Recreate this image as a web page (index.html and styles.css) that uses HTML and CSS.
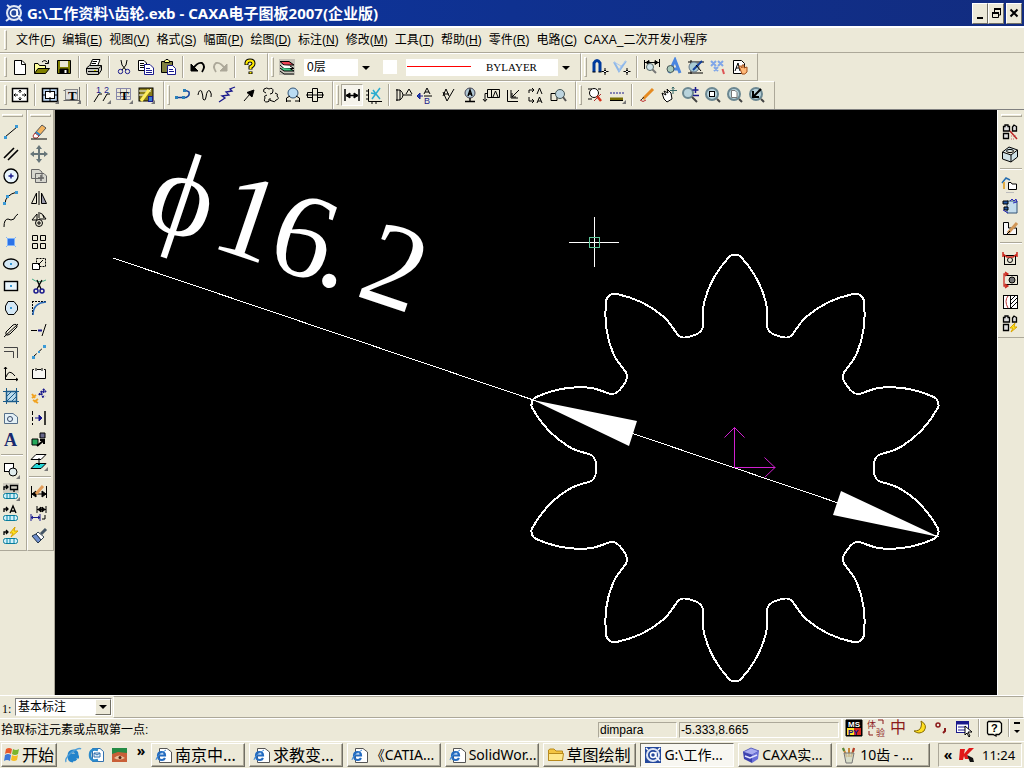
FILE: index.html
```html
<!DOCTYPE html>
<html lang="zh-CN">
<head>
<meta charset="utf-8">
<title>CAXA电子图板2007</title>
<link rel="stylesheet" href="styles.css">
</head>
<body>
<header class="titlebar">
  <svg class="ico" viewBox="0 0 20 20"><path d="M3 2L7 5M17 2L14 5M2 18L6 15M15 15L18 18" stroke="#dfe6f5" stroke-width="2"/><circle cx="10" cy="10" r="7" stroke="#dfe6f5" stroke-width="2" fill="#24489c"/><circle cx="10" cy="10" r="3.5" stroke="#fff" stroke-width="1.6"/><path d="M13 6V12L16 14" stroke="#fff" stroke-width="1.5"/></svg>
  <h1>G:\工作资料\齿轮.exb - CAXA电子图板2007(企业版)</h1>
  <div class="winbtns">
    <button aria-label="最小化"><svg viewBox="0 0 14 18"><path d="M4 14H10" stroke="#000" stroke-width="2"/></svg></button>
    <button aria-label="还原"><svg viewBox="0 0 14 18"><path d="M5.500 8V5H11.500V11H9" stroke="#000"/><path d="M5 5H12M3 9H10" stroke="#000" stroke-width="2"/><path d="M3.500 9V13.500H9.500V9" stroke="#000"/></svg></button>
    <button class="close" aria-label="关闭"><svg viewBox="0 0 14 18"><path d="M3.500 5.500L10.500 12.500M10.500 5.500L3.500 12.500" stroke="#000" stroke-width="2"/></svg></button>
  </div>
</header>

<nav class="menubar">
  <span class="grip"></span>
  <button>文件(<u>F</u>)</button><button>编辑(<u>E</u>)</button><button>视图(<u>V</u>)</button><button>格式(<u>S</u>)</button><button>幅面(<u>P</u>)</button><button>绘图(<u>D</u>)</button><button>标注(<u>N</u>)</button><button>修改(<u>M</u>)</button><button>工具(<u>T</u>)</button><button>帮助(<u>H</u>)</button><button>零件(<u>R</u>)</button><button>电路(<u>C</u>)</button><button>CAXA_二次开发小程序</button>
</nav>

<div class="toolrow">
  <div class="toolbar">
    <span class="grip"></span>
    <button class="tb" aria-label="新建"><svg viewBox="0 0 20 20"><path d="M4.500 3.500H12L15.500 7V17.500H4.500Z" fill="#fff"/><path d="M11.500 3.500V7.500H15.500"/></svg></button>
    <button class="tb" aria-label="打开"><svg viewBox="0 0 20 20"><path d="M2.500 16.500V6.500H6L7.500 8.500H13.500V11.500" fill="#ffff9c"/><path d="M2.500 16.500L6 11.500H17.500L13.500 16.500Z" fill="#808000"/><path d="M10 5Q13 2 15.500 5.500M16.500 3V6.500H13"/></svg></button>
    <button class="tb" aria-label="保存"><svg viewBox="0 0 20 20"><path d="M3.500 3.500H16.500V16.500H3.500Z" fill="#808000"/><path d="M6 4H14V10H6Z" fill="#e8e6d4" stroke="none"/><path d="M6 12H14V16H6Z" fill="#000"/><path d="M11.500 13V16" stroke="#fff" stroke-width="2"/></svg></button>
    <span class="sep"></span>
    <button class="tb" aria-label="打印"><svg viewBox="0 0 20 20"><path d="M6 8L8.500 2.500H16L14 8" fill="#fff"/><path d="M8.500 4.500H13M7.500 6.500H12"/><path d="M2.500 11L5.500 8.500H17.500V13L14.500 17.500H3.500L2.500 15.500Z" fill="#c8c8c0"/><path d="M2.500 11.500H14.500L17.500 9M14.500 12V17M4 14.500H14"/><path d="M10 13.500H12" stroke="#cc0"/></svg></button>
    <span class="sep"></span>
    <button class="tb" aria-label="剪切"><svg viewBox="0 0 20 20"><path d="M7 3L8 8L12 13M13 3L12 8L8 13" /><circle cx="6.500" cy="14.500" r="2.200" class="nb"/><circle cx="13.500" cy="14.500" r="2.200" class="nb"/></svg></button>
    <button class="tb" aria-label="复制"><svg viewBox="0 0 20 20"><path d="M2.500 3.500H8L10.500 6V13.500H2.500Z" fill="#fff"/><path d="M4 6.500H8M4 8.500H9M4 10.500H9"/><path d="M8.500 7.500H14L17.500 11V17.500H8.500Z" fill="#fff" class="nb"/><path d="M10 11.500H14M10 13.500H16M10 15.500H16" class="nb"/></svg></button>
    <button class="tb" aria-label="粘贴"><svg viewBox="0 0 20 20"><path d="M3.500 4.500H14.500V15.500H3.500Z" fill="#808040"/><path d="M6.500 5.500V4L8 2.500H10L11.500 4V5.500Z" fill="#ffff80"/><path d="M9.500 8.500H14.500L17.500 11.500V17.500H9.500Z" fill="#fff" class="nb"/><path d="M11 12.500H15M11 14.500H16" class="nb"/></svg></button>
    <span class="sep"></span>
    <button class="tb" aria-label="撤销"><svg viewBox="0 0 20 20"><path d="M3 7V14H10Z" fill="#000"/><path d="M5 12Q9 5 14 6Q18 9 14 15" stroke-width="1.800"/></svg></button>
    <button class="tb" aria-label="重做"><svg viewBox="0 0 20 20"><path d="M17 7V14H10Z" fill="#aca899" stroke="#aca899"/><path d="M15 12Q11 5 6 6Q2 9 6 15" stroke="#aca899" stroke-width="1.800"/></svg></button>
    <span class="sep"></span>
    <button class="tb" aria-label="帮助"><svg viewBox="0 0 20 20"><path d="M6.500 8V6Q7 3.500 10 3.500Q13.500 3.500 13.500 6.500Q13.500 8.500 10.500 10V12.500M10.500 14.500V17" stroke-width="4"/><path d="M6.500 7.500V6Q7 3.500 10 3.500Q13.500 3.500 13.500 6.500Q13.500 8.500 10.500 10V12M10.500 15V16.500" stroke="#ffeb00" stroke-width="2"/></svg></button>
  </div>
  <div class="toolbar">
    <span class="grip"></span>
    <button class="tb" aria-label="图层"><svg viewBox="0 0 20 20"><rect x="2" y="2" width="16" height="16" fill="#c6c3b8" stroke="none"/><path d="M3 4.500H12L17 8H7Z" fill="#e45"/><path d="M3 8L7 11.500H17L13 9" fill="#fff"/><path d="M3 11L7 14H17L13 11.500" fill="#4c8"/><path d="M3 14L7 17H17"/></svg></button>
    <span class="combo layer"><select aria-label="当前层"><option>0层</option></select><i></i></span>
    <button class="swatch" aria-label="颜色"></button>
    <span class="combo ltype"><b></b><select aria-label="线型"><option>BYLAYER</option></select><i></i></span>
  </div>
  <div class="toolbar end">
    <span class="grip"></span>
    <button class="tb" aria-label="捕捉"><svg viewBox="0 0 20 20"><path d="M4 15V6Q7 1 10 6V15" stroke="#003a9c" stroke-width="3"/><path d="M2.500 15H5.500M8.500 15H11.500"/><path d="M15 11V18M11.500 14.500H18.500"/><path d="M15 13L16.500 14.500L15 16L13.500 14.500Z" fill="#fff"/></svg></button>
    <button class="tb" aria-label="捕捉点"><svg viewBox="0 0 20 20"><path d="M2 5L7 14L14 4" stroke="#8fb8e8" stroke-width="2"/><path d="M2 5L9 9L14 4M9 9L7 14" stroke="#aac8ee"/><path d="M15 11V18M11.500 14.500H18.500"/><path d="M15 13L16.500 14.500L15 16L13.500 14.500Z" fill="#fff"/></svg></button>
    <span class="sep"></span>
    <button class="tb" aria-label="查询"><svg viewBox="0 0 20 20"><path d="M2.500 3V12M17.500 2V10M3 5.500H17M4 5.500L7 3.500V7.500ZM16 5.500L13 3.500V7.500Z" fill="#000"/><circle cx="8" cy="10" r="3.500" fill="#cfe3ea" stroke="#566"/><path d="M10.500 12.500L14 16" stroke="#777" stroke-width="2"/></svg></button>
    <button class="tb" aria-label="文字查询"><svg viewBox="0 0 20 20"><path d="M5 16L11 3L16 16M7 12H14" stroke="#4a86e0" stroke-width="3"/><circle cx="6.500" cy="12" r="3.500" fill="#a9cabb" stroke="#455"/></svg></button>
    <button class="tb" aria-label="面积查询"><svg viewBox="0 0 20 20"><path d="M2 5H18M2 16H17M5 3V17"/><circle cx="8" cy="10" r="5" fill="#a9ccd5" stroke="#678"/><path d="M7 13L16 4" stroke="#123f9c" stroke-width="2"/><path d="M10 8L15 14"/></svg></button>
    <button class="tb" aria-label="格式刷"><svg viewBox="0 0 20 20"><path d="M3 4L8 9M8 4L3 9M10 4L15 9M15 4L10 9M6 10L10 14M10 10L6 14" stroke="#7fa6e8" stroke-width="2"/><path d="M14.500 12L16 17" stroke="#d55" stroke-width="2"/></svg></button>
    <button class="tb" aria-label="拖动"><svg viewBox="0 0 20 20"><path d="M3.500 3.500H11.500L14.500 6.500V16.500H3.500Z" fill="#fff"/><path d="M5 14L8 6L10 14M6 11H10"/><path d="M9 9Q11 8 12 11V8H14V11L17 10V15Q15 18 12 17Z" fill="#ffb978" stroke="#a0501e"/></svg></button>
  </div>
</div>

<div class="toolrow row2">
  <div class="toolbar">
    <span class="grip"></span>
    <button class="tb" aria-label="图幅"><svg viewBox="0 0 20 20"><rect x="2.500" y="3.500" width="15" height="13" fill="#fff" stroke-width="1.500"/><path d="M10 5V8M10 12V15M4 10H8M12 10H16M8.500 6.500L10 5L11.500 6.500M8.500 13.500L10 15L11.500 13.500M5.500 8.500L4 10L5.500 11.500M14.500 8.500L16 10L14.500 11.500"/></svg></button>
    <span class="sep"></span>
    <button class="tb" aria-label="图框"><svg viewBox="0 0 20 20"><rect x="2.500" y="3.500" width="15" height="13" fill="#bbd4f0" stroke-width="1.500"/><rect x="5.500" y="6.500" width="9" height="7" fill="#fff"/><path d="M10 3V8M10 12V17M2 10H6M14 10H18"/><path d="M19 15V19H15Z" fill="#777" stroke="none"/></svg></button>
    <button class="tb" aria-label="标题栏"><svg viewBox="0 0 20 20"><path d="M1.500 5.500H16M17.500 2V17M1.500 15.500H17" stroke="#666"/><rect x="3.500" y="4.500" width="12" height="10" fill="#ddd" stroke="#888"/><text x="6" y="15" class="st">T</text><path d="M19 15V19H15Z" fill="#777" stroke="none"/></svg></button>
    <span class="sep"></span>
    <button class="tb" aria-label="序号"><svg viewBox="0 0 20 20"><path d="M2 17L7 9H10M11 16L15 9H18"/><text x="4" y="8" class="sn">1</text><text x="12" y="8" class="sn">2</text><path d="M19 15V19H15Z" fill="#777" stroke="none"/></svg></button>
    <button class="tb" aria-label="明细表"><svg viewBox="0 0 20 20"><path d="M2.500 3.500H16.500V14.500H2.500ZM2.500 7.500H16.500M2.500 11.500H16.500M6.500 3.500V14.500M12.500 3.500V14.500" stroke="#88a"/><text x="6" y="15" class="st">T</text><path d="M19 15V19H15Z" fill="#777" stroke="none"/></svg></button>
    <button class="tb" aria-label="背景"><svg viewBox="0 0 20 20"><rect x="3" y="3" width="14" height="13" fill="#887b18"/><path d="M3 6H15M3 10H8M9 10L15 4" stroke="#fff"/><path d="M5 16L13 5" stroke="#ffed5c" stroke-width="3"/><rect x="12.500" y="11.500" width="4" height="5" fill="#3a7fd0" class="nb"/><path d="M19 15V19H15Z" fill="#777" stroke="none"/></svg></button>
  </div>
  <div class="toolbar">
    <span class="grip"></span>
    <button class="tb" aria-label="多段线"><svg viewBox="0 0 20 20"><path d="M2 12.500H13Q17 11 16 7Q14 5 11 6" stroke="#123f9c" stroke-width="1.500"/><path d="M2 11H5V14H2ZM9 11H12V14H9ZM10 4H13V7H10Z" fill="#2b80b8" stroke="none"/></svg></button>
    <button class="tb" aria-label="波浪线"><svg viewBox="0 0 20 20"><path d="M3 10Q4 4 6.500 6Q8 10 8 14Q10 17 11 12Q12 4 15 6Q17 9 16 12"/></svg></button>
    <button class="tb" aria-label="双折线"><svg viewBox="0 0 20 20"><path d="M2 17L8 13L5 11L12 10L9 7L15 6L13 4L18 2" class="nb" stroke-width="1.300"/></svg></button>
    <button class="tb" aria-label="箭头"><svg viewBox="0 0 20 20"><path d="M5 16L11 9"/><path d="M15 5L13 12L8 7.500Z" fill="#000"/></svg></button>
    <button class="tb" aria-label="齿轮"><svg viewBox="0 0 20 20"><path d="M5 8Q1 7 3 4Q6 2 8 4Q12 2 12 6Q12 9 9 9M14 8Q18 9 16 11Q19 14 15 15Q14 18 11 16Q8 16 9 13M6 10Q2 11 4 13Q2 17 6 17Q9 17 8 14"/></svg></button>
    <button class="tb" aria-label="圆弧拟合"><svg viewBox="0 0 20 20"><circle cx="10" cy="8" r="5" fill="#b9dbf3" stroke="#357"/><path d="M3.500 17V13L7 11M16.500 17V13L13 11M4 16H8M16 16H12"/></svg></button>
    <button class="tb" aria-label="孔轴"><svg viewBox="0 0 20 20"><path d="M2.500 7.500H7.500V3.500H12.500V7.500H17.500V12.500H12.500V16.500H7.500V12.500H2.500ZM1 10H19M7.500 7V13M12.500 7V13"/></svg></button>
  </div>
  <div class="toolbar">
    <span class="grip"></span>
    <button class="tb on" aria-label="基本标注"><svg viewBox="0 0 20 20"><path d="M3 4V16M17 4V16M4 10.500H16" stroke-width="1.500"/><path d="M4 10.500L8 8V13ZM16 10.500L12 8V13Z" fill="#000"/></svg></button>
    <button class="tb" aria-label="坐标标注"><svg viewBox="0 0 20 20"><path d="M4.500 4V16.500H18M2 14H5M2 10H5M2 6H5M8 17V19M12 17V19"/><path d="M8 14L16 3M9 5L12 9L16 14M7 8L12 9" stroke="#29acd0" stroke-width="1.500"/></svg></button>
    <span class="sep"></span>
    <button class="tb" aria-label="倒角标注"><svg viewBox="0 0 20 20"><path d="M3 4V16M2 5H6Q12 10 6 15H2M6 5V15M9 10H18M12 9L15 4L18 9"/></svg></button>
    <button class="tb" aria-label="引出说明"><svg viewBox="0 0 20 20"><path d="M1 11L4 8V14ZM3 11H7" class="nb" fill="#1755c0"/><path d="M8 9L11 3L14 9M9 7H13M8 11H16"/><text x="8" y="19" class="sn">B</text></svg></button>
    <button class="tb" aria-label="粗糙度"><svg viewBox="0 0 20 20"><path d="M5 7L9 16L16 4M5 11L8 4L11 11M5 9H11"/></svg></button>
    <button class="tb" aria-label="基准代号"><svg viewBox="0 0 20 20"><circle cx="10" cy="8" r="5" fill="#afc6d3" stroke="#445"/><path d="M8 11L10 5L12 11M8 9H12M10 13V16M5 16.500H15" stroke-width="1.400"/></svg></button>
    <button class="tb" aria-label="形位公差"><svg viewBox="0 0 20 20"><path d="M5.500 4.500H17.500V12.500H5.500ZM9.500 4.500V12.500M5.500 8.500H3V16M1 14L3 16.500L5 14M11 12L13.500 6L16 12"/></svg></button>
    <button class="tb" aria-label="焊接符号"><svg viewBox="0 0 20 20"><path d="M3.500 5V16.500H14M7 5V13H14M8 12L15 5M8 8V12H12"/></svg></button>
    <button class="tb" aria-label="剖切符号"><svg viewBox="0 0 20 20"><path d="M3 5H8M6 3L8 5L6 7M3 5V8M3 12V16H8M6 14L8 16L6 18M11 9L13.500 3L16 9M11 18L13.500 12L16 18M12 16H15"/></svg></button>
    <button class="tb" aria-label="局部放大"><svg viewBox="0 0 20 20"><path d="M3 15.500V8.500H8M3 15.500H9V12"/><circle cx="12" cy="9" r="4.500" fill="#bdd4df" stroke="#455"/><path d="M15 12L18 16" stroke-width="2" stroke="#555"/></svg></button>
  </div>
  <div class="toolbar end">
    <span class="grip"></span>
    <button class="tb" aria-label="重画"><svg viewBox="0 0 20 20"><path d="M3 4H7M13 4H16M3 14H7"/><circle cx="9" cy="8" r="4.500" fill="#fff"/><path d="M12 11L16 16" stroke="#d7301a" stroke-width="2.500"/><path d="M16 9L9 16" stroke="#a33"/></svg></button>
    <button class="tb" aria-label="线宽"><svg viewBox="0 0 20 20"><path d="M3 8H17" stroke-dasharray="2 1" class="nb"/><path d="M3 14H16" stroke="#756b00" stroke-width="3"/><path d="M3 15.500H16"/><path d="M19 15V19H15Z" fill="#777" stroke="none"/></svg></button>
    <span class="sep"></span>
    <button class="tb" aria-label="画笔"><svg viewBox="0 0 20 20"><path d="M3 15Q6 18 9 15" stroke="#b33"/><path d="M6 14L16 4" stroke="#e58a21" stroke-width="3"/><path d="M4 15L7 12" stroke="#333"/></svg></button>
    <button class="tb" aria-label="平移"><svg viewBox="0 0 20 20"><path d="M3 8L7 10L5 6L9 8L8 4L12 8L13 14L8 17L5 14Z" fill="#fff"/><path d="M14 2V9M11 5.500H18M13 3.500L14 2L15.500 3.500" stroke="#366"/></svg></button>
    <button class="tb" aria-label="缩放"><svg viewBox="0 0 20 20"><circle cx="7" cy="8" r="5" class="lens"/><path d="M11 12L16 17" class="handle"/><path d="M14.500 2V8M11.500 5H17.500M12 10.500H18" class="nb" stroke-width="1.500"/></svg></button>
    <button class="tb" aria-label="窗口缩放"><svg viewBox="0 0 20 20"><circle cx="9" cy="9" r="6" class="lens"/><rect x="6.500" y="6.500" width="5" height="5" fill="#fff"/><path d="M14 14L17 17" class="handle"/></svg></button>
    <button class="tb" aria-label="全部显示"><svg viewBox="0 0 20 20"><circle cx="9" cy="9" r="6" class="lens"/><path d="M6.500 5.500H10L12 7.500V12.500H6.500Z" fill="#fff" stroke="#777"/><path d="M14 14L17 17" class="handle"/></svg></button>
    <button class="tb" aria-label="显示回溯"><svg viewBox="0 0 20 20"><circle cx="9" cy="9" r="6" class="lens"/><path d="M6 6V12H12M6 12L14 4" stroke-width="2"/><path d="M14 14L17 17" class="handle"/></svg></button>
  </div>
</div>

<main class="work">
  <aside class="dock left">
    <div class="vbar">
      <span class="vgrip"></span>
      <button class="tb" aria-label="直线"><svg viewBox="0 0 20 20"><path d="M4 15L16 5"/><path d="M3 14H6V17H3ZM14 3H17V6H14Z" class="pt"/></svg></button>
      <button class="tb" aria-label="平行线"><svg viewBox="0 0 20 20"><path d="M3 14L13 4M7 16L17 6" stroke-width="1.600"/></svg></button>
      <button class="tb" aria-label="圆"><svg viewBox="0 0 20 20"><circle cx="10" cy="10" r="7" fill="#e9f5fc" stroke-width="1.300"/><path d="M10 7.500V12.500M7.500 10H12.500" class="nb" stroke-width="1.400"/></svg></button>
      <button class="tb" aria-label="圆弧"><svg viewBox="0 0 20 20"><path d="M4 16Q4 7 16 4"/><path d="M2 14H5V17H2ZM5 7H8V10H5ZM14 3H17V6H14Z" class="pt"/></svg></button>
      <button class="tb" aria-label="样条"><svg viewBox="0 0 20 20"><path d="M3 17Q3 9 7 9Q10 11 13 9Q14 6 17 4"/></svg></button>
      <button class="tb" aria-label="点"><svg viewBox="0 0 20 20"><path d="M5 5L15 15M15 5L5 15" stroke="#7fb3f7"/><rect x="6.500" y="6.500" width="7" height="7" fill="#2c73e8" stroke="#7fb3f7"/></svg></button>
      <button class="tb" aria-label="椭圆"><svg viewBox="0 0 20 20"><ellipse cx="10" cy="10" rx="7.500" ry="5" fill="#d4e8f5" stroke-width="1.300"/><path d="M9 9H11V11H9Z" class="pt"/></svg></button>
      <button class="tb" aria-label="矩形"><svg viewBox="0 0 20 20"><rect x="3.500" y="5.500" width="13" height="9" fill="#e9f5fc" stroke-width="1.400"/><path d="M9 9H11V11H9Z" class="pt"/></svg></button>
      <button class="tb" aria-label="正多边形"><svg viewBox="0 0 20 20"><path d="M7 3.500H13L16.500 8V12L13 16.500H7L4.500 12V8Z" fill="#d4e8f5"/><path d="M9 9H11V11H9Z" class="pt"/></svg></button>
      <button class="tb" aria-label="中心线"><svg viewBox="0 0 20 20"><path d="M5 12L12 5Q16 3 16 7L9 14Q4 17 5 12ZM3 17L17 4"/></svg></button>
      <button class="tb" aria-label="等距线"><svg viewBox="0 0 20 20"><path d="M3 5.500H16.500V16M3 9.500H12.500V16" stroke="#444"/></svg></button>
      <button class="tb" aria-label="公式曲线"><svg viewBox="0 0 20 20"><path d="M4.500 3V15.500H17M3 5L4.500 3L6 5M15 14L17 15.500L15 17M5 13Q8 4 14 12"/></svg></button>
      <button class="tb" aria-label="剖面线"><svg viewBox="0 0 20 20"><path d="M5.500 5.500H15.500V15.500H5.500Z" fill="#bcdcec" stroke="#1b5b8a" stroke-width="1.500"/><path d="M5.500 2V18M15.500 2V18M2 5.500H18M2 15.500H18M6 10L10 6M6 15L15 6M11 15L15 11" stroke="#1b5b8a"/></svg></button>
      <button class="tb" aria-label="填充"><svg viewBox="0 0 20 20"><path d="M3.500 5.500H12L16.500 9V15.500H3.500Z" fill="#e3f0f5" stroke="#57708a"/><circle cx="9" cy="11" r="2.500" stroke="#346"/></svg></button>
      <button class="tb" aria-label="文字"><svg viewBox="0 0 20 20"><text x="3" y="16" class="big">A</text></svg></button>
      <span class="vsep"></span>
      <button class="tb" aria-label="块生成"><svg viewBox="0 0 20 20"><rect x="3.500" y="3.500" width="9" height="8" fill="#fff"/><circle cx="12" cy="12" r="4" fill="#e1ecec"/><path d="M19 15V19H15Z" fill="#777" stroke="none"/></svg></button>
      <button class="tb" aria-label="提取图符"><svg viewBox="0 0 20 20"><rect x="2" y="1" width="16" height="10" fill="#cfccc0" stroke="none"/><path d="M3 8V5H7M5 3L7 5L5 7M9.500 3.500H16.500V7.500H9.500ZM13 7.500V10" stroke-width="1.300"/><rect x="2.500" y="11.500" width="14" height="5" rx="2" class="tag"/><path d="M6 12V16M9 12V16M13 12V16" stroke="#08a"/><path d="M19 15V19H15Z" fill="#777" stroke="none"/></svg></button>
      <button class="tb" aria-label="技术要求"><svg viewBox="0 0 20 20"><path d="M3 8V5H7M5 3L7 5L5 7M9 9L12 2L15 9M10 7H14" stroke-width="1.300"/><rect x="2.500" y="11.500" width="14" height="5" rx="2" class="tag"/><path d="M6 12V16M9 12V16M13 12V16" stroke="#08a"/></svg></button>
      <button class="tb" aria-label="构件库"><svg viewBox="0 0 20 20"><path d="M3 9V6H7M5 4L7 6L5 8" stroke-width="1.300"/><path d="M14 1L9 7H12L10 11L17 5H13Z" fill="#ffe521" stroke="#d9a400"/><rect x="2.500" y="12.500" width="14" height="5" rx="2" class="tag"/><path d="M6 13V17M9 13V17M13 13V17" stroke="#08a"/></svg></button>
    </div>
    <div class="vbar">
      <span class="vgrip"></span>
      <button class="tb" aria-label="删除"><svg viewBox="0 0 20 20"><path d="M6 11L13 3L17 6L10 14Z" fill="#f4b45e" stroke="#555"/><path d="M6 11L10 14L8 16H5L4 14Z" fill="#fff" stroke="#a33"/><path d="M7 10L11 13" stroke="#38c" stroke-width="2"/><path d="M2 17H18"/></svg></button>
      <button class="tb" aria-label="移动"><svg viewBox="0 0 20 20"><path d="M10 3V17M3 10H17" stroke="#667579" stroke-width="2"/><path d="M10 1L13 5H7ZM10 19L7 15H13ZM1 10L5 7V13ZM19 10L15 7V13Z" fill="#667579" stroke="none"/></svg></button>
      <button class="tb" aria-label="复制对象"><svg viewBox="0 0 20 20"><path d="M2.500 3.500H10L13 6V12.500H2.500ZM6.500 7.500H15L17.500 10V16.500H6.500Z" fill="#d6d6ce" stroke="#666"/><path d="M12 9V15M9 12H15" stroke="#666" stroke-width="1.500"/></svg></button>
      <button class="tb" aria-label="镜像"><svg viewBox="0 0 20 20"><path d="M10 3V17"/><path d="M7.500 5V15.500H2.500Z"/><path d="M12.500 5V15.500H17.500Z" fill="#99a"/></svg></button>
      <button class="tb" aria-label="旋转"><svg viewBox="0 0 20 20"><path d="M3 10L8 4V10ZM10 2V8M11 3Q14 3 15 8M10 9H17L14 5"/><circle cx="10" cy="13" r="3.500"/><path d="M10 11V15M8 13H12"/></svg></button>
      <button class="tb" aria-label="阵列"><svg viewBox="0 0 20 20"><path d="M3.500 3.500H8.500V8.500H3.500ZM11.500 3.500H16.500V8.500H11.500ZM3.500 11.500H8.500V16.500H3.500ZM11.500 11.500H16.500V16.500H11.500Z"/></svg></button>
      <button class="tb" aria-label="比例缩放"><svg viewBox="0 0 20 20"><path d="M7.500 4.500H16.500V12.500H7.500Z" stroke-dasharray="2 1"/><path d="M3.500 9.500H10.500V15.500H3.500Z" fill="#fff"/><path d="M9 11L14 6"/></svg></button>
      <button class="tb" aria-label="裁剪"><svg viewBox="0 0 20 20"><path d="M3 3Q10 8 17 4" stroke="#4a8"/><path d="M8 4L12 13M13 4L8 13" stroke-width="1.300"/><circle cx="7" cy="15" r="2" class="nb" stroke-width="1.500"/><circle cx="13" cy="15" r="2" class="nb" stroke-width="1.500"/></svg></button>
      <button class="tb" aria-label="过渡"><svg viewBox="0 0 20 20"><path d="M3 3.500H18M3.500 3V18" stroke-dasharray="2 1"/><path d="M4 17Q4 5 17 4" stroke="#2768b8" stroke-width="1.500"/></svg></button>
      <button class="tb" aria-label="延伸"><svg viewBox="0 0 20 20"><path d="M2 10.500H8M13 16L17 4"/><path d="M9 10.500H13" class="nb" stroke-width="2"/></svg></button>
      <button class="tb" aria-label="打断"><svg viewBox="0 0 20 20"><path d="M4 15L16 4" stroke-dasharray="5 2"/><path d="M3 14H6V17H3ZM9 9H11V11H9ZM14 3H17V6H14Z" class="pt"/></svg></button>
      <button class="tb" aria-label="拉伸"><svg viewBox="0 0 20 20"><path d="M3.500 5.500H16.500V14.500H3.500Z" fill="#f6f6f2" stroke="none"/><path d="M5 5.500H3.500V14.500H16.500V5.500H15M8 5.500H12M7 4V7M13 4V7"/></svg></button>
      <button class="tb" aria-label="打散"><svg viewBox="0 0 20 20"><path d="M3 8L6 12M3 12L7 9M5 16L9 13M4 14L9 17" stroke="#f1a321" stroke-width="2"/><path d="M10 9L13 5M12 9L16 4M14 3L17 6M13 11L16 10" class="nb" stroke-dasharray="2 1" stroke-width="2"/></svg></button>
      <button class="tb" aria-label="属性移动"><svg viewBox="0 0 20 20"><path d="M3.500 3V17" stroke-dasharray="4 2"/><path d="M16 3V17" stroke-width="1.500"/><path d="M6 10H12M10 7L13 10L10 13Z" class="nb" fill="#009"/></svg></button>
      <button class="tb" aria-label="改变颜色"><svg viewBox="0 0 20 20"><path d="M11 3H16V8H11Z" fill="#668"/><path d="M3 9H9V15H3Z" fill="#24a75a"/><path d="M8 16L14 11M11 10H15V14" stroke-width="2"/></svg></button>
      <button class="tb" aria-label="改变层"><svg viewBox="0 0 20 20"><path d="M7 2.500H17L12 7.500H2Z" fill="#fff"/><path d="M7 11.500H17L12 16.500H2Z" fill="#23d7d7"/><path d="M10 6V13M8 11L10 13L12 11"/><path d="M19 15V19H15Z" fill="#777" stroke="none"/></svg></button>
      <span class="vsep"></span>
      <button class="tb" aria-label="标注编辑"><svg viewBox="0 0 20 20"><path d="M2.500 4V16M17.500 4V16M3 12H17M3 12L7 9V15ZM17 12L13 9V15Z" fill="#000"/><path d="M7 12L14 4" stroke="#e19b57" stroke-width="3"/></svg></button>
      <button class="tb" aria-label="尺寸驱动"><svg viewBox="0 0 20 20"><path d="M8 2V9M17 2V9M8 5.500H17M9 5.500L12 3V8ZM16 5.500L13 3V8Z" fill="#000"/><path d="M2 10V17M11 10V17M2 13.500H11M4 12L2 13.500L4 15M9 12L11 13.500L9 15" class="nb"/><path d="M16 11V15H13"/></svg></button>
      <button class="tb" aria-label="格式匹配"><svg viewBox="0 0 20 20"><path d="M17 3L12 8" stroke="#456" stroke-width="3"/><path d="M9 6L15 11L12 14L7 8Z" fill="#fff" stroke="#345"/><path d="M7 8L12 14L9 17L3 10Z" fill="#6f8fce" stroke="#234"/></svg></button>
    </div>
  </aside>

  <svg class="canvas" viewBox="55 110 942 585" role="img" aria-label="齿轮图">
    <defs><path id="tooth" d="M-43-132.200C-36-134-31-137-32-145C-32-151-33-157-31-165C-27-182-18-198-6-211Q-4-213.500 0-213.500Q4-213.500 6-211C18-198 27-182 31-165C33-157 32-151 32-145C31-137 36-134 43-132.200"/></defs>
    <g class="gear" transform="translate(735 468)">
      <use href="#tooth"/><use href="#tooth" transform="rotate(36)"/><use href="#tooth" transform="rotate(72)"/><use href="#tooth" transform="rotate(108)"/><use href="#tooth" transform="rotate(144)"/><use href="#tooth" transform="rotate(180)"/><use href="#tooth" transform="rotate(216)"/><use href="#tooth" transform="rotate(252)"/><use href="#tooth" transform="rotate(288)"/><use href="#tooth" transform="rotate(324)"/>
    </g>
    <path class="dim" d="M113 258L939 537"/>
    <path class="arrow" d="M533 400L637 421L629 446ZM939 537L841 491L833 515Z"/>
    <g transform="rotate(18.700)" class="dimtext"><text x="206" y="166">ϕ</text><text x="276 334 387 430" y="166">16.2</text></g>
    <path class="ucs" d="M734.500 467.500V427.500M724.500 437.500L734.500 427.500L744.500 437.500M734.500 467.500H775.500M764.500 457.500L775 467.500L764.500 477.500"/>
    <path class="cross" d="M594.500 217V267M569 242.500H619"/><rect class="pick" x="589.500" y="237.500" width="10" height="10"/>
  </svg>

  <aside class="dock right">
    <div class="vbar">
      <span class="vgrip"></span>
      <button class="tb" aria-label="零件拆分"><svg viewBox="0 0 20 20"><path d="M3.500 4.500H5V3H8V4.500H9.500V9H3.500ZM12.500 9V5L14 3L16.500 4.500V9ZM3.500 11.500H8.500V16.500H3.500Z" fill="#ddd" stroke-width="1.300"/><path d="M10 9L17 17" stroke="#b22" stroke-width="1.500"/><path d="M11 14H16M11 17H15" stroke="#c66" stroke-dasharray="1 1"/></svg></button>
      <button class="tb" aria-label="三维"><svg viewBox="0 0 20 20"><path d="M2.500 8L9 3L17.500 6V13L11 18L2.500 15ZM2.500 8L11 11L17.500 6M11 11V18" fill="#cfe0e4"/><ellipse cx="10" cy="7" rx="3.500" ry="1.600"/></svg></button>
      <span class="vsep"></span>
      <button class="tb" aria-label="部件插入"><svg viewBox="0 0 20 20"><path d="M2 9L6 4L10 6" stroke="#256eb0" stroke-width="1.500"/><path d="M4 8V15" stroke="#e0ab44" stroke-width="2"/><path d="M8.500 8.500H11L12 10H16.500V15.500H8.500Z" fill="#fff"/><path d="M6 18.500H14" stroke="#bbb"/></svg></button>
      <button class="tb" aria-label="部件编辑"><svg viewBox="0 0 20 20"><path d="M7 5H17V17H7Z" fill="#c3dcec" stroke="#357"/><path d="M3 5H8V8H3ZM4 11H8V14H4Z" fill="#235aa6"/><path d="M3 14L8 17M10 5L12 3L14 5L16 3L17 6L13 7" stroke="#2b2bb8"/></svg></button>
      <button class="tb" aria-label="部件修改"><svg viewBox="0 0 20 20"><path d="M3.500 4.500H8.500V10H16.500V16.500H3.500Z" fill="#f7f7f7"/><path d="M8 15L17 5" stroke="#d19758" stroke-width="3"/><path d="M7 16L10 13"/></svg></button>
      <span class="vsep"></span>
      <button class="tb" aria-label="配合"><svg viewBox="0 0 20 20"><rect x="4.500" y="7.500" width="11" height="9"/><circle cx="10" cy="12" r="2.500"/><path d="M3 4V9M17 4V9M3 6L7 9H13L17 6" stroke="#cc2a1f" stroke-width="1.500"/></svg></button>
      <button class="tb" aria-label="旋转配合"><svg viewBox="0 0 20 20"><path d="M5 5.500H17.500V14.500H5"/><circle cx="12" cy="10" r="3" fill="#777"/><path d="M7 4H4V16H7M5 2L8 4L5 6M5 14L8 16L5 18" stroke="#cc2a1f" stroke-width="1.300"/></svg></button>
      <button class="tb" aria-label="剖视"><svg viewBox="0 0 20 20"><rect x="3.500" y="3.500" width="14" height="13" fill="#fff"/><path d="M10.500 3V17M11 8L16 3M11 12L17 6M11 16L17 10"/><path d="M8 4Q4 9 8 16" stroke="#b33"/></svg></button>
      <button class="tb" aria-label="自动拆分"><svg viewBox="0 0 20 20"><path d="M3.500 3.500H5V2H8V3.500H9.500V8H3.500ZM12.500 8V4L14 2L16.500 3.500V8ZM3.500 10.500H8.500V16.500H3.500Z" fill="#ddd" stroke-width="1.300"/><path d="M15 9L10 14H13L11 18L17 13H14Z" fill="#ffe521" stroke="#d9a400"/></svg></button>
    </div>
  </aside>
</main>

<section class="params">
  <label for="dimtype">1:</label>
  <span class="combo raised"><select id="dimtype"><option>基本标注</option></select><i></i></span>
  <span class="filler"></span>
</section>

<section class="status">
  <p>拾取标注元素或点取第一点:</p>
  <span class="field f1">dimpara</span>
  <span class="field f2">-5.333,8.665</span>
  <div class="langbar">
    <button class="tb" aria-label="微软拼音"><svg viewBox="0 0 20 20"><path d="M2 2H18V18H2Z" fill="#000"/><path d="M3 10H10V17H3Z" fill="#ffe12b" stroke="none"/><path d="M10 10H17V17H10Z" fill="#d9261c" stroke="none"/><text x="4" y="9" class="ms">MS</text><text x="4" y="17" class="py">PY</text></svg></button>
    <button class="tb" aria-label="体验"><svg viewBox="0 0 20 20"><text x="1" y="10" class="red s">体</text><text x="10" y="18" class="red s">验</text><path d="M12 2H17V6M3 13V17H7" stroke="#8b1a1a"/></svg></button>
    <button class="tb red zh">中</button>
    <button class="tb" aria-label="半角"><svg viewBox="0 0 20 20"><path d="M11 3Q18 7 14 13Q9 17 4 13Q10 13 11 9Q12 6 11 3Z" fill="#ffdf20" stroke="#876b00"/></svg></button>
    <button class="tb" aria-label="中文标点"><svg viewBox="0 0 20 20"><circle cx="6" cy="7" r="2" stroke="#8b1a1a" stroke-width="1.500"/><path d="M13 10V13L11 15" stroke="#8b1a1a" stroke-width="2"/></svg></button>
    <button class="tb" aria-label="菜单"><svg viewBox="0 0 20 20"><rect x="2.500" y="3.500" width="12" height="11" fill="#fff" class="nb"/><path d="M3 5H14" class="nb" stroke-width="3"/><path d="M4 9H12M4 12H12" class="nb"/><path d="M11 8V17L13 15L15 19L16 18L14 14H18Z" fill="#fff"/></svg></button>
    <span class="sep"></span>
    <button class="tb" aria-label="输入法帮助"><svg viewBox="0 0 20 20"><path d="M4.500 3.500H15.500L17.500 5.500V14L15 16.500H12V18L9 16.500H4.500L3.500 15V4.500Z" fill="#fffff0" stroke-width="1.300"/><text x="7" y="14" class="q">?</text></svg></button>
    <span class="sep"></span>
    <button class="more" aria-label="选项"><svg viewBox="0 0 8 20"><path d="M1 5H7" stroke-width="2"/><path d="M1 12H7L4 15Z" fill="#000" stroke="none"/></svg></button>
  </div>
</section>

<footer class="taskbar">
  <button class="start"><svg class="ico" viewBox="0 0 20 20"><path d="M4 4Q7 2 10 4L9 9Q6 7 3 9Z" fill="#e9592b"/><path d="M11 4Q14 6 17 4L16 9Q13 11 10 9Z" fill="#7ab52e"/><path d="M3 10Q6 8 9 10L8 16Q5 14 2 16Z" fill="#3e78d8"/><path d="M10 10Q13 12 16 10L15 15Q12 17 9 15Z" fill="#f6bd24"/></svg>开始</button>
  <div class="quick">
    <a href="#ie" aria-label="Internet Explorer"><svg viewBox="0 0 20 20"><path d="M16 12H6.500Q7 15 10 15Q12 15 13 13.500M6 10H14Q14 6 10.500 6Q6 6 6 11Q6 16 10 16" stroke="#2383cb" stroke-width="3"/><path d="M3 17Q1 14 9 7Q16 2 18 4" stroke="#4f9ed8" stroke-width="1.500"/></svg></a>
    <a href="#outlook" aria-label="Outlook Express"><svg viewBox="0 0 20 20"><path d="M6.500 3.500H14L17.500 6.500V16.500H6.500Z" fill="#fff" stroke="#3170ae"/><path d="M12 5Q4 3 4 10Q4 17 12 15" stroke="#2b8bcc" stroke-width="2.500"/><path d="M8 8H14V12H8ZM8 8L11 10L14 8" fill="#e6f3fb" stroke="#3170ae"/></svg></a>
    <a href="#desk" aria-label="图片"><svg viewBox="0 0 20 20"><rect x="3" y="3" width="15" height="14" fill="#c95f38"/><path d="M3 3H18V8L9 7L3 9Z" fill="#258b45"/><path d="M5 13Q10 8 16 13Q10 16 5 13" fill="#ebc29d"/><circle cx="11" cy="12.500" r="1.500" fill="#521"/></svg></a>
  </div>
  <button class="chev">»</button>
  <div class="tasks">
    <button class="wide"><svg class="ico" viewBox="0 0 20 20"><path d="M5.500 3.500H13L17.500 7V17.500H5.500Z" fill="#fff" stroke="#555"/><path d="M4 10.500H11Q11 7 7.500 7Q4 7 4 11Q4 15 8 15Q10 15 11 13" stroke="#236bc0" stroke-width="2.200"/><path d="M2 15Q2 11 12 5" stroke="#4a90d8"/></svg>南京中...</button>
    <button class="wide"><svg class="ico" viewBox="0 0 20 20"><path d="M5.500 3.500H13L17.500 7V17.500H5.500Z" fill="#fff" stroke="#555"/><path d="M4 10.500H11Q11 7 7.500 7Q4 7 4 11Q4 15 8 15Q10 15 11 13" stroke="#236bc0" stroke-width="2.200"/><path d="M2 15Q2 11 12 5" stroke="#4a90d8"/></svg>求教变...</button>
    <button><svg class="ico" viewBox="0 0 20 20"><path d="M5.500 3.500H13L17.500 7V17.500H5.500Z" fill="#fff" stroke="#555"/><path d="M4 10.500H11Q11 7 7.500 7Q4 7 4 11Q4 15 8 15Q10 15 11 13" stroke="#236bc0" stroke-width="2.200"/><path d="M2 15Q2 11 12 5" stroke="#4a90d8"/></svg>《CATIA...</button>
    <button><svg class="ico" viewBox="0 0 20 20"><path d="M5.500 3.500H13L17.500 7V17.500H5.500Z" fill="#fff" stroke="#555"/><path d="M4 10.500H11Q11 7 7.500 7Q4 7 4 11Q4 15 8 15Q10 15 11 13" stroke="#236bc0" stroke-width="2.200"/><path d="M2 15Q2 11 12 5" stroke="#4a90d8"/></svg>SolidWor...</button>
    <button class="wide"><svg class="ico" viewBox="0 0 20 20"><path d="M2.500 15.500V5L4 4H8L10 6H16.500V15.500Z" fill="#f4c542" stroke="#b88a1c"/><path d="M2.500 15.500V8.500H17.500L16.500 15.500Z" fill="#ffe78a" stroke="#b88a1c"/></svg>草图绘制</button>
    <button class="active" aria-pressed="true"><svg class="ico" viewBox="0 0 20 20"><rect x="2" y="2" width="16" height="16" fill="#24489c"/><circle cx="10" cy="10" r="6" stroke="#dfe6f5" stroke-width="2"/><circle cx="10" cy="10" r="2.500" stroke="#fff" stroke-width="1.500"/><path d="M13 7V12L17 16M3 3L5 5M17 3L15 5" stroke="#fff" stroke-width="1.500"/></svg>G:\工作...</button>
    <button><svg class="ico" viewBox="0 0 20 20"><path d="M2 7L10 3L18 6L11 10Z" fill="#a9adf0" stroke="#5b60c0"/><path d="M2 7L11 10V18L3 14Z" fill="#3b41ae"/><path d="M11 10L18 6L17 14L11 18Z" fill="#6a70d8"/><path d="M4 11L9 13L16 10" stroke="#e4e6ff" stroke-width="1.600"/></svg>CAXA实...</button>
    <button><svg class="ico" viewBox="0 0 20 20"><path d="M8 12L4 3M10 12V3M12 12L15 3" stroke="#c98934" stroke-width="2"/><path d="M4 3L5 6" stroke="#4a8a3c" stroke-width="2"/><path d="M15 3L14 7" stroke="#b43b2c" stroke-width="2"/><path d="M5 8H15L13 18H7Z" fill="#cfd6c2" fill-opacity=".7" stroke="#777"/></svg>10齿 - ...</button>
  </div>
  <div class="tray">
    <button class="chev">«</button>
    <svg class="ico" viewBox="0 0 20 20"><path d="M4 4H9L8 9L13 3H18L11 10L13 14H9L8 11L7 15H3Z" fill="#e11919"/><path d="M11 10L17 13L18 17L14 17Z" fill="#111"/></svg>
    <time>11:24</time>
  </div>
</footer>
</body>
</html>
```
FILE: styles.css
```css
* { box-sizing: border-box; }
html, body { height: 100%; }
body {
  margin: 0;
  display: flex;
  flex-direction: column;
  min-height: 100vh;
  background: #ece9d8;
  color: #000;
  font: 12px/16px "Liberation Sans", "Noto Sans CJK SC", sans-serif;
  overflow: hidden;
}
button, select { font: inherit; color: inherit; margin: 0; padding: 0; border: 0; background: none; border-radius: 0; }
svg { fill: none; display: block; }
.ico { width: 20px; height: 20px; flex: none; }

.titlebar {
  display: flex;
  align-items: center;
  height: 26px;
  flex: none;
  padding: 0 2px 0 4px;
  gap: 3px;
  background: linear-gradient(90deg, #0c36a4, #0f3190 50%, #122c80);
  color: #fff;
}
.titlebar h1 { flex: 1; margin: 0; font: bold 15px/20px "Noto Sans", "Noto Sans CJK SC", sans-serif; white-space: nowrap; }
.winbtns { display: flex; }
.winbtns button {
  width: 16px;
  height: 21px;
  background: #ece9d8;
  border: 1px solid;
  border-color: #fff #716f64 #716f64 #fff;
}
.winbtns .close { margin-left: 2px; }
.winbtns svg { width: 14px; height: 18px; }

.menubar {
  display: flex;
  align-items: center;
  height: 27px;
  flex: none;
  padding-left: 4px;
  border-top: 2px solid #fff;
  border-bottom: 1px solid #aca899;
}
.menubar button { padding: 0 4px 0 3px; white-space: nowrap; }
.menubar .grip { margin-right: 6px; }
.grip {
  width: 3px;
  height: 20px;
  flex: none;
  border: 1px solid;
  border-color: #fff #aca899 #aca899 #fff;
}
.toolrow { display: flex; height: 28px; flex: none; }
.toolbar {
  display: flex;
  align-items: center;
  padding: 0 6px 0 4px;
  border-top: 1px solid #fff;
  border-right: 1px solid #aca899;
  border-bottom: 1px solid #aca899;
}
.toolbar + .toolbar { border-left: 1px solid #fff; padding-left: 2px; }
.toolbar .grip { margin-right: 2px; }
.tb { width: 22px; height: 22px; flex: none; display: flex; align-items: center; justify-content: center; }
.tb svg { width: 20px; height: 20px; flex: none; stroke: #000; }
.tb.on { border: 1px solid; border-color: #aca899 #fff #fff #aca899; background: #f6f4ec; }
.tb text { stroke: none; fill: #000; }
.sep { width: 2px; height: 22px; margin: 0 3px; flex: none; border-left: 1px solid #aca899; border-right: 1px solid #fff; }
.tb .nb { stroke: #1a1a8c; }
.tb .pt { fill: #3b9ad6; stroke: none; }
.tb .tag { fill: #d3f0fa; stroke: #087c9c; }
.tb .lens { fill: #b8d3dc; stroke: #6b8791; stroke-width: 2; }
.tb .handle { stroke: #444; stroke-width: 2; }
.tb .st { font: bold 13px "Liberation Serif", serif; }
.tb .sn { font: 9px "Liberation Sans", sans-serif; fill: #1a1a8c; }
.tb .big { font: bold 18px "Liberation Serif", serif; fill: #17296f; }
.tb .ms { font: bold 8px "Liberation Sans", sans-serif; fill: #fff; }
.tb .py { font: bold 8px "Liberation Sans", sans-serif; fill: #10108c; }
.tb .q { font: bold 11px "Liberation Sans", sans-serif; }

.combo { position: relative; display: flex; height: 17px; background: #fff; }
.combo select { width: 100%; height: 100%; appearance: none; outline: 0; }
.combo i {
  position: absolute;
  right: 0;
  top: 0;
  width: 16px;
  height: 100%;
  background: #ece9d8;
  pointer-events: none;
}
.combo i::after {
  content: "";
  position: absolute;
  left: 4px;
  top: 7px;
  border: 4px solid transparent;
  border-top-color: #000;
  border-bottom: 0;
}
.layer { width: 70px; margin-left: 6px; }
.layer select { padding-left: 3px; }
.swatch { width: 14px; height: 14px; background: #fff; margin: 0 9px; }
.ltype { width: 168px; }
.ltype select { padding-left: 80px; font: 11px "Liberation Serif", serif; }
.ltype b { position: absolute; z-index: 1; left: 1px; top: 7px; width: 64px; height: 1px; background: #f00; }

.row2 { height: 29px; border-bottom: 1px solid #808080; }
.row2 .toolbar { border-bottom: 0; padding-bottom: 1px; }

.work { display: flex; flex: 1; min-height: 0; background: #000; }
.dock { display: flex; background: #ece9d8; flex: none; align-items: flex-start; }
.vbar { display: flex; flex-direction: column; align-items: flex-start; padding-top: 4px; width: 27px; }
.left { border-right: 1px solid #aca899; }
.left .vbar { height: 441px; border-bottom: 1px solid #aca899; border-right: 1px solid #aca899; }
.left .vbar + .vbar { border-left: 1px solid #fff; }
.vgrip { width: 21px; height: 3px; flex: none; border: 1px solid; border-color: #fff #aca899 #aca899 #fff; margin: 0 0 4px 2px; }
.vsep { width: 22px; height: 2px; margin: 3px 0 3px 1px; flex: none; border-top: 1px solid #aca899; border-bottom: 1px solid #fff; }
.right { border-left: 1px solid #fff; }
.right .vbar { width: 26px; padding-left: 1px; padding-bottom: 2px; border-bottom: 1px solid #aca899; }

.canvas { flex: 1; min-width: 0; height: 100%; background: #000; }
.gear { stroke: #fff; stroke-width: 2; shape-rendering: crispEdges; }
.dim { stroke: #fff; shape-rendering: crispEdges; }
.arrow { fill: #fff; }
.dimtext { fill: #fff; font: 120px "Liberation Serif", serif; }
.ucs { stroke: #d020d0; }
.cross { stroke: #fff; }
.pick { stroke: #5fc79a; }

.params {
  display: flex;
  align-items: center;
  height: 23px;
  flex: none;
  padding-left: 2px;
  border-top: 1px solid #fff;
}
.params label { width: 13px; padding-top: 3px; font-family: "Liberation Serif", serif; }
.raised { width: 97px; height: 18px; border: 1px solid; border-color: #808080 #fff #fff #808080; }
.raised select { padding-left: 2px; }
.raised i { border: 1px solid; border-color: #fff #716f64 #716f64 #fff; }
.raised i::after { left: 3px; top: 5px; }
.filler { flex: 1; align-self: stretch; margin-left: 1px; border: 1px solid; border-color: #aca899 #fff #aca899 #fff; }

.status { display: flex; align-items: center; height: 23px; flex: none; border-top: 1px solid #fff; }
.status p { flex: 1; margin: 0; padding-left: 1px; white-space: nowrap; }
.field { height: 16px; line-height: 15px; border: 1px solid; border-color: #aca899 #fff #fff #aca899; margin-right: 2px; padding-left: 1px; }
.f1 { width: 79px; }
.f2 { width: 160px; }
.langbar { display: flex; align-items: center; align-self: stretch; width: 183px; padding-bottom: 4px; border-left: 2px solid #fff; }
.langbar .tb, .langbar .sep { height: 18px; }
.red { color: #8b1a1a; }
.tb .red { fill: #8b1a1a; }
.tb .s { font: 9px "Noto Sans CJK SC", sans-serif; }
.zh { font-size: 16px; }
.more { width: 10px; flex: none; display: flex; justify-content: flex-start; }
.more svg { width: 8px; height: 20px; stroke: #000; }

.taskbar {
  display: flex;
  align-items: center;
  height: 27px;
  flex: none;
  border-top: 1px solid #fff;
  padding: 0 2px 1px 1px;
  font: 14px/20px "Noto Sans", "Noto Sans CJK SC", sans-serif;
}
.start, .tasks button {
  display: flex;
  align-items: center;
  height: 24px;
  border: 1px solid;
  border-color: #fff #716f64 #716f64 #fff;
  box-shadow: inset -1px -1px #aca899;
  white-space: nowrap;
  overflow: hidden;
}
.start { width: 56px; font-size: 16px; }
.quick { display: flex; gap: 3px; margin-left: 6px; }
.quick svg { width: 20px; height: 20px; }
.chev { width: 16px; font-weight: bold; line-height: 16px; }
.taskbar > .chev { margin: 0 2px 8px 4px; }
.tasks { display: flex; flex: 1; gap: 4px; min-width: 0; }
.tasks button { flex: 1 1 0; min-width: 0; padding-left: 2px; gap: 1px; }
.tasks .wide { font-size: 16px; }
.tasks .active { background: #f8f7f1; border-color: #716f64 #fff #fff #716f64; box-shadow: none; }
.tray {
  display: flex;
  align-items: center;
  height: 24px;
  width: 84px;
  margin-left: 8px;
  padding-left: 1px;
  border: 1px solid;
  border-color: #aca899 #fff #fff #aca899;
}
.tray time { margin-left: 6px; font-size: 13px; }
```
